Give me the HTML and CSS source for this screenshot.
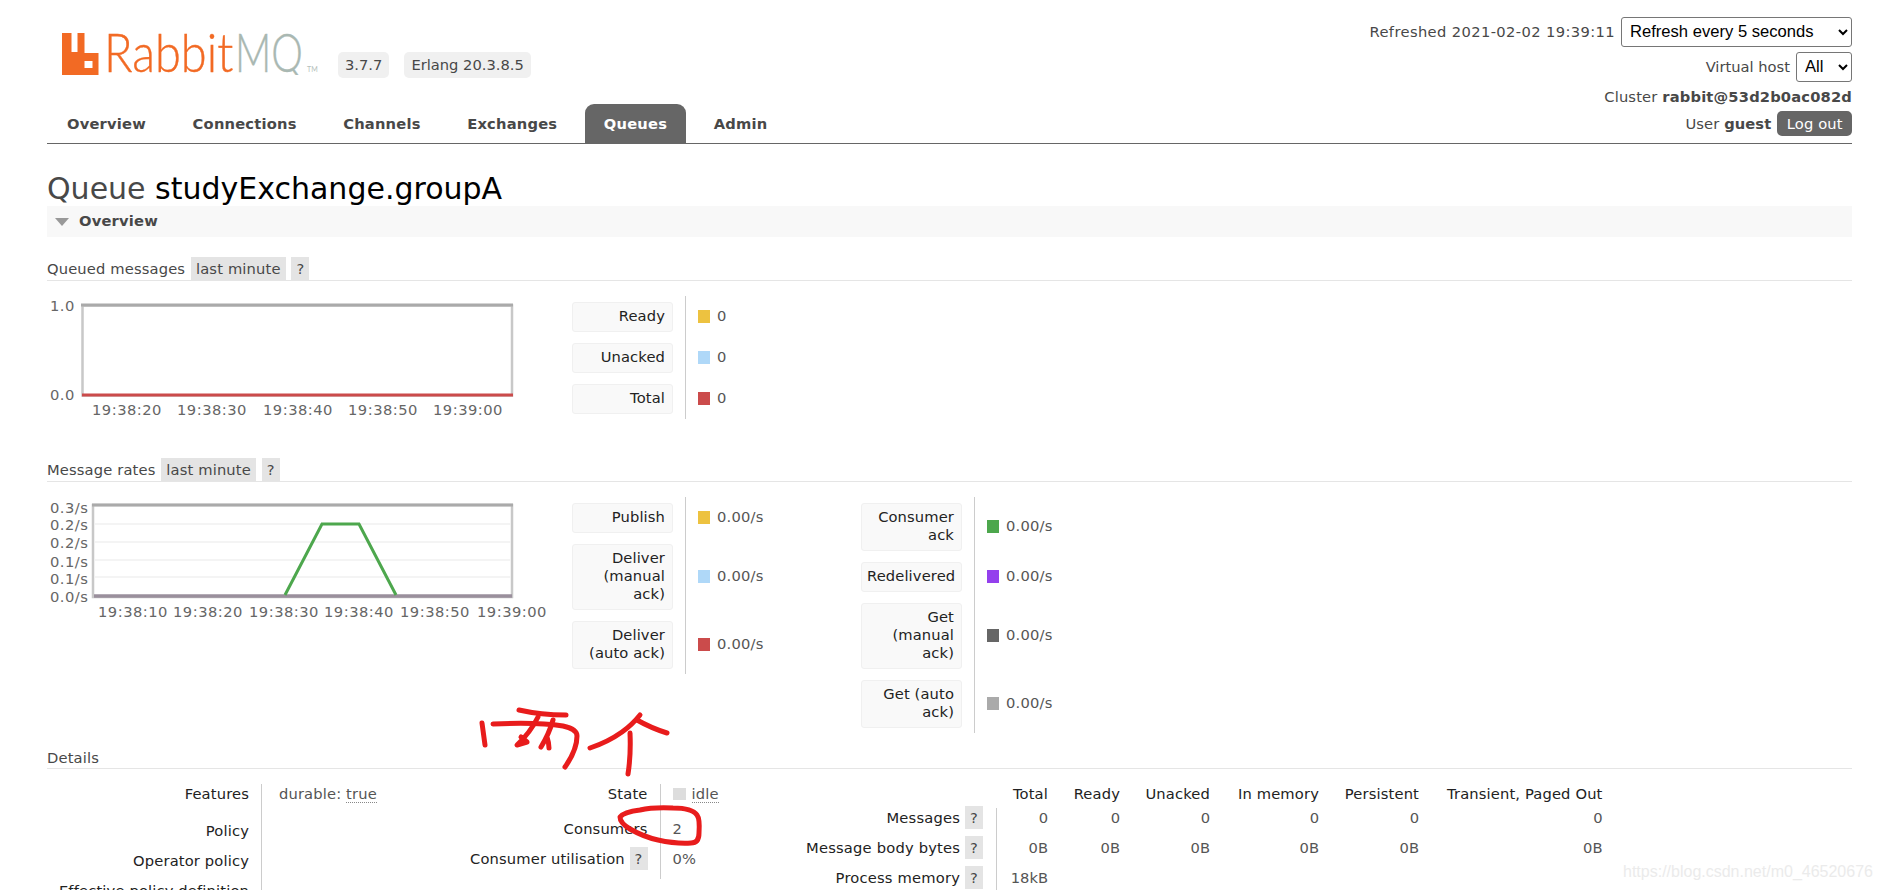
FILE: index.html
```html
<!DOCTYPE html>
<html lang="en">
<head>
<meta charset="utf-8">
<title>RabbitMQ Management</title>
<link rel="stylesheet" href="styles.css">
</head>
<body>
<div class="outer">
  <header class="header">
    <div class="header-left">
      <div class="brand">
        <svg class="logo" viewBox="0 0 260 46" width="260" height="46" role="img" aria-label="RabbitMQ">
          <path fill="#f26a24" fill-rule="evenodd" d="M2 4h9.500v19h6V4h7v20h14v24H2zM24.500 32v7h8v-7z"/>
          <text class="logo-rabbit" transform="translate(44 43) scale(.87 1)">Rabbit</text>
          <text class="logo-mq" transform="translate(175 43) scale(.74 1)">MQ</text>
          <text class="logo-tm" x="247" y="43">TM</text>
        </svg>
        <span class="pill pill-version">3.7.7</span>
        <span class="pill">Erlang 20.3.8.5</span>
      </div>
      <nav class="tabs">
        <a class="tab">Overview</a>
        <a class="tab">Connections</a>
        <a class="tab">Channels</a>
        <a class="tab">Exchanges</a>
        <a class="tab tab-active">Queues</a>
        <a class="tab">Admin</a>
      </nav>
    </div>
    <div class="header-right">
      <div class="hr-row hr-refresh">
        <span class="digits">Refreshed 2021-02-02 19:39:11</span>
        <select class="sel sel-refresh"><option>Refresh every 5 seconds</option></select>
      </div>
      <div class="hr-row hr-vhost">
        <span>Virtual host</span>
        <select class="sel sel-vhost"><option>All</option></select>
      </div>
      <div class="hr-row hr-cluster">Cluster&nbsp;<b>rabbit@53d2b0ac082d</b></div>
      <div class="hr-row hr-user">
        <span>User&nbsp;<b>guest</b></span>
        <span class="logout">Log out</span>
      </div>
    </div>
  </header>

  <h1 class="title">Queue <b>studyExchange.groupA</b></h1>
  <div class="band"><span class="tri"></span>Overview</div>

  <h3 class="sub sub-first">Queued messages <span class="hint">last minute</span> <span class="hint">?</span></h3>
  <div class="chart-row chart-row-a">
    <svg class="chart" viewBox="47 295 520 123" width="520" height="123">
      <rect x="82.500" y="304.500" width="429.500" height="90" fill="#fff" stroke="#c8c8c8" stroke-width="2.500"/>
      <line x1="81" y1="304" x2="513" y2="304" stroke="#aaa" stroke-width="3"/>
      <line x1="82" y1="394" x2="513" y2="394" stroke="#cb4b4b" stroke-width="3"/>
      <g class="axis">
        <text x="50" y="310">1.0</text>
        <text x="50" y="399">0.0</text>
        <text x="92" y="414">19:38:20</text>
        <text x="177" y="414">19:38:30</text>
        <text x="263" y="414">19:38:40</text>
        <text x="348" y="414">19:38:50</text>
        <text x="433" y="414">19:39:00</text>
      </g>
    </svg>
    <div class="legend">
      <div class="lg-label"><div class="lg-box">Ready</div></div>
      <div class="lg-val"><i class="sw sw-yellow"></i>0</div>
      <div class="lg-label"><div class="lg-box">Unacked</div></div>
      <div class="lg-val"><i class="sw sw-blue"></i>0</div>
      <div class="lg-label"><div class="lg-box">Total</div></div>
      <div class="lg-val"><i class="sw sw-red"></i>0</div>
    </div>
  </div>

  <h3 class="sub sub-second">Message rates <span class="hint">last minute</span> <span class="hint">?</span></h3>
  <div class="chart-row chart-row-b">
    <svg class="chart" viewBox="47 497 520 130" width="520" height="130">
      <rect x="93" y="505" width="419" height="92" fill="#fff" stroke="#c8c8c8" stroke-width="2.500"/>
      <g stroke="#f0f0f0" stroke-width="1.500">
        <line x1="94" y1="524" x2="511" y2="524"/>
        <line x1="94" y1="542" x2="511" y2="542"/>
        <line x1="94" y1="560" x2="511" y2="560"/>
        <line x1="94" y1="577" x2="511" y2="577"/>
      </g>
      <line x1="92" y1="505" x2="513" y2="505" stroke="#aaa" stroke-width="3"/>
      <line x1="94" y1="596" x2="512" y2="596" stroke="#9a8f9c" stroke-width="3.500"/>
      <polyline points="285,595 322,524 359,524 396,595" fill="none" stroke="#4da74d" stroke-width="3"/>
      <g class="axis">
        <text x="50" y="513">0.3/s</text>
        <text x="50" y="530">0.2/s</text>
        <text x="50" y="548">0.2/s</text>
        <text x="50" y="567">0.1/s</text>
        <text x="50" y="584">0.1/s</text>
        <text x="50" y="602">0.0/s</text>
        <text x="98" y="617">19:38:10</text>
        <text x="173" y="617">19:38:20</text>
        <text x="249" y="617">19:38:30</text>
        <text x="324" y="617">19:38:40</text>
        <text x="400" y="617">19:38:50</text>
        <text x="477" y="617">19:39:00</text>
      </g>
    </svg>
    <div class="legend">
      <div class="lg-label"><div class="lg-box">Publish</div></div>
      <div class="lg-val"><i class="sw sw-yellow"></i>0.00/s</div>
      <div class="lg-label"><div class="lg-box">Deliver (manual ack)</div></div>
      <div class="lg-val"><i class="sw sw-blue"></i>0.00/s</div>
      <div class="lg-label"><div class="lg-box">Deliver (auto ack)</div></div>
      <div class="lg-val"><i class="sw sw-red"></i>0.00/s</div>
    </div>
    <div class="legend">
      <div class="lg-label"><div class="lg-box">Consumer ack</div></div>
      <div class="lg-val"><i class="sw sw-green"></i>0.00/s</div>
      <div class="lg-label"><div class="lg-box">Redelivered</div></div>
      <div class="lg-val"><i class="sw sw-purple"></i>0.00/s</div>
      <div class="lg-label"><div class="lg-box">Get (manual ack)</div></div>
      <div class="lg-val"><i class="sw sw-dark"></i>0.00/s</div>
      <div class="lg-label"><div class="lg-box">Get (auto ack)</div></div>
      <div class="lg-val"><i class="sw sw-gray"></i>0.00/s</div>
    </div>
  </div>

  <h3 class="sub sub-details">Details</h3>
  <div class="details">
    <div class="facts facts-a">
      <div class="fk fk-tall">Features</div><div class="fv fk-tall">durable: <abbr class="dot">true</abbr></div>
      <div class="fk">Policy</div><div class="fv"></div>
      <div class="fk">Operator policy</div><div class="fv"></div>
      <div class="fk">Effective policy definition</div><div class="fv"></div>
    </div>
    <div class="facts facts-b">
      <div class="fk fk-mid">State</div><div class="fv fk-mid"><i class="sw-idle"></i><abbr class="dot">idle</abbr></div>
      <div class="fk">Consumers</div><div class="fv">2</div>
      <div class="fk">Consumer utilisation <span class="hint">?</span></div><div class="fv">0%</div>
    </div>
    <div class="stats">
      <div class="st-head"></div>
      <div class="st-h">Total</div><div class="st-h">Ready</div><div class="st-h">Unacked</div><div class="st-h">In memory</div><div class="st-h">Persistent</div><div class="st-h">Transient, Paged Out</div>

      <div class="st-k">Messages <span class="hint">?</span></div>
      <div class="st-v st-first">0</div><div class="st-v">0</div><div class="st-v">0</div><div class="st-v">0</div><div class="st-v">0</div><div class="st-v">0</div>

      <div class="st-k">Message body bytes <span class="hint">?</span></div>
      <div class="st-v st-first">0B</div><div class="st-v">0B</div><div class="st-v">0B</div><div class="st-v">0B</div><div class="st-v">0B</div><div class="st-v">0B</div>

      <div class="st-k">Process memory <span class="hint">?</span></div>
      <div class="st-v st-first">18kB</div>
    </div>
  </div>
</div>

<svg class="ink" viewBox="0 0 1880 890" width="1880" height="890" aria-hidden="true">
  <g fill="none" stroke="#e81c1c" stroke-width="5" stroke-linecap="round" stroke-linejoin="round">
    <path d="M482 723l3 22"/>
    <path d="M519 710q22 5 47 5"/>
    <path d="M493 724q45 -2 70 2q14 3 14 10q0 14 -12 31"/>
    <path d="M538 717q-8 16 -21 28l10 -3l-6 -5"/>
    <path d="M553 720q-4 14 -12 27M547 737q2 6 2 11"/>
    <path d="M640 715q-8 10 -18 17q-14 10 -32 16"/>
    <path d="M637 720q14 8 30 13"/>
    <path d="M630 733q1 22 -2 41"/>
    <path d="M640 810q-16 2 -20 7q0 6 10 12q14 8 28 11q18 4 33 3q8 0 8 -10q1 -14 -2 -18q-5 -7 -24 -7q-20 -1 -33 2z"/>
  </g>
</svg>
<div class="watermark">https://blog.csdn.net/m0_46520676</div>
</body>
</html>
```

FILE: styles.css
```css
html, body {
  margin: 0;
  padding: 0;
  height: 890px;
  overflow: hidden;
  background: #fff;
}
body {
  position: relative;
  font: 14.7px/18px "DejaVu Sans", Verdana, sans-serif;
  color: #484848;
}
.outer {
  margin: 0 28px 0 47px;
}
b { color: #484848; }

/* header */
.header {
  display: flex;
  justify-content: space-between;
  height: 143px;
  border-bottom: 1px solid #666;
  box-sizing: content-box;
}
.header-left {
  display: flex;
  flex-direction: column;
  justify-content: space-between;
}
.brand {
  display: flex;
  align-items: flex-start;
  padding-top: 29px;
  padding-left: 13px;
}
.logo { display: block; margin-right: 18px; flex: none; width: 260px; }
.logo-rabbit { font: 300 54px "Lato", sans-serif; fill: #f26a24; stroke: #f26a24; stroke-width: .4px; }
.logo-mq { font: 300 54px "Lato", sans-serif; fill: #a9b8b2; stroke: #a9b8b2; stroke-width: .4px; }
.logo-tm { font: 400 7px "Lato", sans-serif; fill: #b5bfbb; }
.pill {
  background: #f0f0f0;
  border-radius: 5px;
  padding: 4px 7px;
  margin-top: 23px;
  margin-right: 15px;
  white-space: nowrap;
  color: #484848;
}
.tabs { display: flex; gap: 8.600px; margin-left: 1px; }
.tab {
  padding: 0 19px;
  height: 39px;
  line-height: 40px;
  font-weight: 700;
  color: #484848;
  border-radius: 9px 9px 0 0;
  letter-spacing: 0.2px;
}
.tab-active { background: #666; color: #fff; }

.header-right {
  display: flex;
  flex-direction: column;
  align-items: flex-end;
}
.hr-row { display: flex; align-items: center; justify-content: flex-end; gap: 6px; }
.digits { letter-spacing: .38px; }
.hr-refresh { margin-top: 17px; height: 29px; }
.hr-vhost { margin-top: 6px; height: 29px; }
.hr-cluster { margin-top: 6px; height: 20px; gap: 0; letter-spacing: .16px; }
.hr-user { margin-top: 4px; height: 25px; letter-spacing: .1px; }
.sel {
  font: 16.600px "Liberation Sans", Arial, sans-serif;
  height: 30px;
  background: #fff;
  color: #000;
  border: 1px solid #767676;
  border-radius: 3px;
  padding: 0 4px;
}
.sel-refresh { width: 231px; }
.sel-vhost { width: 56px; }
.logout {
  background: #666;
  color: #fff;
  border-radius: 5px;
  height: 25px;
  line-height: 25px;
  padding: 0 9.500px;
}

/* titles */
.title {
  margin: 27px 0 0;
  height: 35px;
  font-size: 30px;
  line-height: 35px;
  font-weight: 400;
  color: #484848;
}
.title b { font-weight: 400; color: #000; }
.band {
  height: 31px;
  box-sizing: border-box;
  padding-bottom: 2px;
  background: #f8f8f8;
  font-weight: 700;
  color: #484848;
  display: flex;
  align-items: center;
  letter-spacing: 0.2px;
}
.tri {
  width: 0;
  height: 0;
  border-left: 7px solid transparent;
  border-right: 7px solid transparent;
  border-top: 8px solid #999;
  margin: 2px 10px 0 8px;
}
.sub {
  margin: 0;
  font-size: 14.7px;
  font-weight: 400;
  height: 23px;
  line-height: 23px;
  border-bottom: 1px solid #e5e5e5;
  color: #484848;
  box-sizing: content-box;
  letter-spacing: .15px;
}
.sub-first { margin-top: 20px; }
.sub-second { margin-top: 39px; }
.sub-details { margin-top: 12px; line-height: 25px; }
.hint {
  background: #e4e4e4;
  padding: 3px 5px;
  color: #484848;
}
.sub .hint { display: inline-block; line-height: 23px; padding: 0 5px; height: 23px; vertical-align: top; margin-left: 1px; }

/* charts */
.chart-row { display: flex; align-items: flex-start; margin-top: 15px; }
.chart-row-a { height: 123px; }
.chart-row-b { height: 236px; margin-top: 15px; }
.chart { display: block; flex: none; margin-right: 5px; }
.axis text { font: 14.7px "DejaVu Sans", Verdana, sans-serif; fill: #666; letter-spacing: .5px; }
.legend {
  display: grid;
  grid-template-columns: 113px 1fr;
  width: 289px;
  flex: none;
  line-height: 18px;
}
.lg-label { padding: 5.500px 12px 5.500px 0; }
.lg-box {
  background: #f9f9f9;
  border: 1px solid #f0f0f0;
  border-radius: 3px;
  padding: 4px 7px 6px 5px;
  text-align: right;
  color: #222;
  letter-spacing: .12px;
}
.lg-val {
  border-left: 1px solid #ccc;
  padding: 0 0 2px 12px;
  display: flex;
  align-items: center;
  color: #555;
  white-space: nowrap;
  letter-spacing: .2px;
}
.sw { display: inline-block; width: 12px; height: 13px; margin: 2px 7px 0 0; flex: none; }
.sw-yellow { background: #edc240; }
.sw-blue { background: #afd8f8; }
.sw-red { background: #cb4b4b; }
.sw-green { background: #4da74d; }
.sw-purple { background: #9440ed; }
.sw-dark { background: #666; }
.sw-gray { background: #aaa; }

/* details */
.details { display: flex; align-items: flex-start; margin-top: 15px; }
.facts { display: grid; flex: none; }
.facts-a { grid-template-columns: 214px 206px; width: 420px; }
.facts-b { grid-template-columns: 192.500px 145.500px; width: 338px; }
.fk {
  height: 29px;
  padding: 1px 12px 0 0;
  text-align: right;
  color: #222;
  white-space: nowrap;
  letter-spacing: .15px;
}
.fv {
  height: 29px;
  padding: 1px 0 0 12px;
  border-left: 1px solid #ccc;
  color: #555;
  white-space: nowrap;
  letter-spacing: .15px;
}
.facts-a .fv { padding-left: 17px; }
.fk-tall { height: 36px; }
.fk-mid { height: 34px; }
.dot { text-decoration: none; border-bottom: 1px dotted #888; }
.sw-idle {
  display: inline-block;
  width: 13px;
  height: 12px;
  background: #ddd;
  margin-right: 6px;
  vertical-align: -1px;
}
.stats {
  display: grid;
  grid-template-columns: 191px 52px 72px 90px 109px 100px 183.500px;
  flex: none;
}
.st-head { height: 24px; }
.st-h { height: 24px; padding-top: 1px; box-sizing: border-box; text-align: right; color: #222; white-space: nowrap; letter-spacing: .15px; }
.st-k {
  grid-column: 1;
  height: 29px;
  padding: 1px 13px 0 0;
  text-align: right;
  color: #222;
  white-space: nowrap;
  letter-spacing: .2px;
}
.st-v { height: 29px; padding-top: 1px; text-align: right; color: #555; }
.st-first { border-left: 1px solid #ccc; }

/* overlays */
.ink { position: absolute; left: 0; top: 0; pointer-events: none; }
.watermark {
  position: absolute;
  left: 1623px;
  top: 862px;
  font: 16px/20px "Liberation Sans", Arial, sans-serif;
  color: #ebebeb;
  white-space: nowrap;
}
```
